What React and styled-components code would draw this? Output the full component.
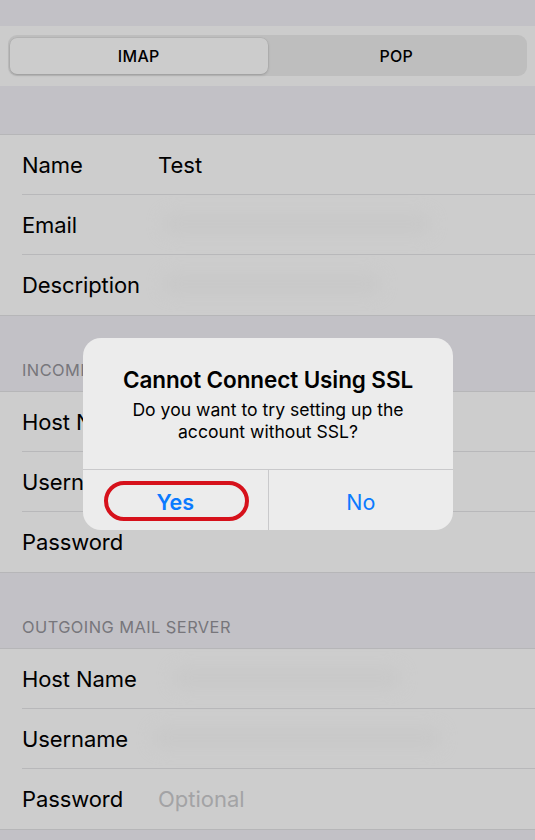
import React from 'react'
import styled, { createGlobalStyle } from 'styled-components'

const Global = createGlobalStyle`
  html, body {
    margin: 0;
    padding: 0;
    background: #c2c1c6;
  }
  * { box-sizing: border-box; }
`

const Page = styled.div`
  position: relative;
  width: 535px;
  height: 840px;
  overflow: hidden;
  background: #c2c1c6;
  font-family: Inter, "Liberation Sans", sans-serif;
  color: #000;
`

const TopGap = styled.div`
  height: 26px;
`

const SegmentBand = styled.div`
  height: 60px;
  background: #cccccc;
  padding: 9px 8px 0;
`

const Segmented = styled.div`
  display: flex;
  height: 41px;
  background: #bebebe;
  border-radius: 9px;
  padding: 3px 2px 2px;
`

const Segment = styled.div`
  flex: 1;
  display: flex;
  align-items: center;
  justify-content: center;
  font-size: 16px;
  font-weight: 500;
  letter-spacing: 0.3px;
  border-radius: 7px;
  background: ${p => (p.$active ? '#cccccc' : 'transparent')};
  box-shadow: ${p => (p.$active ? '0 1px 3px rgba(0,0,0,0.18), 0 0 0 0.5px rgba(0,0,0,0.06)' : 'none')};
`

const Gap = styled.div`
  height: ${p => p.$h}px;
`

const HeaderGap = styled.div`
  height: 75px;
  display: flex;
  align-items: flex-end;
  padding: 0 22px 11px;
  font-size: 16.4px;
  color: #77767b;
  letter-spacing: 0.45px;
`

const Group = styled.div`
  background: #cdcdcd;
  border-top: 1px solid #b6b6b8;
  border-bottom: 1px solid #b6b6b8;
`

const Row = styled.div`
  position: relative;
  display: flex;
  align-items: center;
  height: 60px;
  margin-left: 22px;
  border-bottom: ${p => (p.$last ? 'none' : '1px solid #b8b8ba')};
`

const Label = styled.div`
  width: 136px;
  font-size: 22px;
  letter-spacing: -0.1px;
`

const Value = styled.div`
  font-size: 22px;
  color: ${p => (p.$placeholder ? '#a3a3a5' : '#000')};
`

const Smudge = styled.div`
  position: absolute;
  left: ${p => p.$x}px;
  top: 18px;
  width: ${p => p.$w}px;
  height: 22px;
  border-radius: 12px;
  background: #c5c5c5;
  filter: blur(8px);
  opacity: 0.5;
`

const Dialog = styled.div`
  position: absolute;
  left: 83px;
  top: 338px;
  width: 370px;
  height: 192px;
  border-radius: 18px;
  background: #ececec;
  overflow: hidden;
  display: flex;
  flex-direction: column;
`

const DialogBody = styled.div`
  padding: 28px 16px 0;
  height: 132px;
  text-align: center;
  border-bottom: 1px solid #c9c9cb;
`

const Title = styled.div`
  font-size: 22.5px;
  font-weight: 600;
  line-height: 28px;
  letter-spacing: -0.1px;
`

const Message = styled.div`
  margin-top: 5px;
  font-size: 17.6px;
  line-height: 22px;
`

const Buttons = styled.div`
  flex: 1;
  display: flex;
`

const Btn = styled.div`
  position: relative;
  flex: 1;
  display: flex;
  align-items: center;
  justify-content: center;
  padding-top: 3px;
  font-size: 21.5px;
  font-weight: ${p => (p.$bold ? 600 : 400)};
  color: #0a7aff;
  & + & {
    border-left: 1px solid #c9c9cb;
  }
`

const Ring = styled.div`
  position: absolute;
  left: 21px;
  top: 11px;
  width: 145px;
  height: 40px;
  border: 4px solid #d6111b;
  border-radius: 20px;
`

const Field = ({ label, value, placeholder, smudge, last }) => (
  <Row $last={last}>
    <Label>{label}</Label>
    {value && <Value $placeholder={placeholder}>{value}</Value>}
    {smudge && <Smudge $x={smudge[0]} $w={smudge[1]} />}
  </Row>
)

export default function App() {
  return (
    <Page>
      <Global />
      <TopGap />
      <SegmentBand>
        <Segmented>
          <Segment $active>IMAP</Segment>
          <Segment>POP</Segment>
        </Segmented>
      </SegmentBand>
      <Gap $h={48} />
      <Group>
        <Field label="Name" value="Test" />
        <Field label="Email" smudge={[140, 270]} />
        <Field label="Description" smudge={[140, 220]} last />
      </Group>
      <HeaderGap>INCOMING MAIL SERVER</HeaderGap>
      <Group>
        <Field label="Host Name" />
        <Field label="Username" />
        <Field label="Password" last />
      </Group>
      <HeaderGap>OUTGOING MAIL SERVER</HeaderGap>
      <Group>
        <Field label="Host Name" smudge={[150, 230]} />
        <Field label="Username" smudge={[130, 290]} />
        <Field label="Password" value="Optional" placeholder last />
      </Group>

      <Dialog>
        <DialogBody>
          <Title>Cannot Connect Using SSL</Title>
          <Message>
            Do you want to try setting up the
            <br />
            account without SSL?
          </Message>
        </DialogBody>
        <Buttons>
          <Btn $bold>
            Yes
            <Ring />
          </Btn>
          <Btn>No</Btn>
        </Buttons>
      </Dialog>
    </Page>
  )
}
